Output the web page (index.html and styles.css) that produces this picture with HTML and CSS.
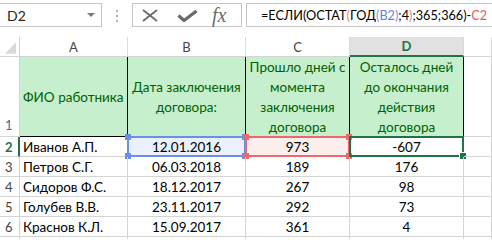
FILE: index.html
```html
<!DOCTYPE html>
<html lang="ru">
<head>
<meta charset="utf-8">
<title>Excel</title>
<link rel="stylesheet" href="styles.css">
</head>
<body>
<div class="toolbar">
  <div class="namebox"><span class="nb-text">D2</span><span class="caret"></span></div>
  <div class="grip"><i></i><i></i><i></i></div>
  <div class="btns">
    <svg class="ic-x" width="18" height="13" viewBox="0 0 18 13"><path d="M2 1 L16 12 M16 1 L2 12" stroke="#6a6a6a" stroke-width="1.8" fill="none"/></svg>
    <svg class="ic-ok" width="21" height="12" viewBox="0 0 21 12"><path d="M1.5 5.5 L7 10.5 L19.5 1" stroke="#6a6a6a" stroke-width="3.2" fill="none"/></svg>
    <span class="fx">fx</span>
  </div>
  <div class="formula"><span>=ЕСЛИ(ОСТАТ</span><span class="c-pink">(</span><span>ГОД</span><span class="c-purple">(</span><span class="c-blue">B2</span><span class="c-purple">)</span><span>;4</span><span class="c-pink">)</span><span>;365;366)-</span><span class="c-red">C2</span></div>
</div>
<div class="sheet">
  <div class="cell corner"><svg width="20" height="20" viewBox="0 0 20 20"><polygon points="5,17 17,17 17,5" fill="#dadada"/></svg></div>
  <div class="cell ch">A</div>
  <div class="cell ch">B</div>
  <div class="cell ch">C</div>
  <div class="cell ch ch-sel">D</div>
  <div class="cell ch"></div>

  <div class="cell rh rh1">1</div>
  <div class="cell r1 left">ФИО работника</div>
  <div class="cell r1">Дата заключения<br>договора:</div>
  <div class="cell r1">Прошло дней с<br>момента<br>заключения<br>договора</div>
  <div class="cell r1">Осталось дней<br>до окончания<br>действия<br>договора</div>
  <div class="cell"></div>

  <div class="cell rh rh-sel">2</div>
  <div class="cell left">Иванов А.П.</div>
  <div class="cell mid ref ref-blue">12.01.2016<span class="hl"><i class="sq tl"></i><i class="sq tr"></i><i class="sq bl"></i><i class="sq br"></i></span></div>
  <div class="cell mid ref ref-red">973<span class="hl"><i class="sq tl"></i><i class="sq tr"></i><i class="sq bl"></i><i class="sq br"></i></span></div>
  <div class="cell mid active">-607<span class="hl"><i class="handle"></i></span></div>
  <div class="cell"></div>

  <div class="cell rh">3</div>
  <div class="cell left">Петров С.Г.</div>
  <div class="cell mid">06.03.2018</div>
  <div class="cell mid">189</div>
  <div class="cell mid">176</div>
  <div class="cell"></div>

  <div class="cell rh">4</div>
  <div class="cell left">Сидоров Ф.С.</div>
  <div class="cell mid">18.12.2017</div>
  <div class="cell mid">267</div>
  <div class="cell mid">98</div>
  <div class="cell"></div>

  <div class="cell rh">5</div>
  <div class="cell left">Голубев В.В.</div>
  <div class="cell mid">23.11.2017</div>
  <div class="cell mid">292</div>
  <div class="cell mid">73</div>
  <div class="cell"></div>

  <div class="cell rh">6</div>
  <div class="cell left">Краснов К.Л.</div>
  <div class="cell mid">15.09.2017</div>
  <div class="cell mid">361</div>
  <div class="cell mid">4</div>
  <div class="cell"></div>

  <div class="cell rh"></div>
  <div class="cell left"></div>
  <div class="cell mid"></div>
  <div class="cell mid"></div>
  <div class="cell mid"></div>
  <div class="cell"></div>
</div>
</body>
</html>
```
FILE: styles.css
```css
* { box-sizing: border-box; }
html, body {
  margin: 0;
  padding: 0;
  width: 492px;
  height: 239px;
  overflow: hidden;
  background: #fff;
  font-family: Lato, "Liberation Sans", sans-serif;
  font-size: 13.5px;
  color: #000;
}

.toolbar {
  display: flex;
  align-items: flex-start;
  height: 37px;
  padding-top: 3px;
  white-space: nowrap;
}
.namebox {
  display: flex;
  align-items: center;
  width: 102px;
  height: 24px;
  border: 1px solid #c6c6c6;
  border-left: none;
  padding-left: 7px;
  color: #262626;
  font-size: 14px;
}
.nb-text { flex: 1; }
.caret {
  width: 0;
  height: 0;
  margin-right: 6px;
  border-left: 4px solid transparent;
  border-right: 4px solid transparent;
  border-top: 4px solid #7a7a7a;
}
.grip {
  display: flex;
  flex-direction: column;
  gap: 3px;
  width: 30px;
  padding-left: 14px;
  padding-top: 7px;
}
.grip i {
  display: block;
  width: 2px;
  height: 2px;
  background: #b4b4b4;
}
.btns {
  display: flex;
  align-items: center;
  width: 110px;
  height: 24px;
  border: 1px solid #c6c6c6;
  padding-left: 8px;
}
.ic-x { margin-right: 18px; }
.ic-ok { margin-right: 14px; margin-top: 1px; }
.fx {
  font-family: "Liberation Serif", serif;
  font-style: italic;
  font-size: 20px;
  color: #6a6a6a;
  line-height: 20px;
}
.formula {
  flex: 1;
  min-width: 0;
  margin-left: 4px;
  height: 24px;
  border: 1px solid #c6c6c6;
  border-right: none;
  padding-left: 14px;
  display: flex;
  align-items: center;
  font-size: 12.7px;
  color: #000;
  overflow: hidden;
}
.c-pink { color: #f07a7a; }
.c-purple { color: #9b7fd4; }
.c-blue { color: #5b83e0; }
.c-red { color: #e45858; }

.sheet {
  display: grid;
  grid-template-columns: 20px 108px 118px 104px 114px 28px;
  grid-template-rows: 20px 80px repeat(6, 20px);
}
.cell {
  display: flex;
  align-items: center;
  justify-content: center;
  border-right: 1px solid #d4d4d4;
  border-bottom: 1px solid #d4d4d4;
  white-space: nowrap;
  overflow: visible;
  position: relative;
}
.left { justify-content: flex-start; padding-left: 3px; }
.mid { justify-content: center; }

.corner { padding: 0; align-items: stretch; }
.corner svg { display: block; }
.ch {
  color: #444;
  font-size: 13px;
  border-right-color: #dadada;
}
.ch-sel {
  background: #e1e1e1;
  color: #217346;
  font-weight: bold;
  border-bottom: 2px solid #217346;
}
.rh {
  justify-content: flex-start;
  padding-left: 5px;
  color: #444;
  font-size: 13px;
}
.rh1 { align-items: flex-end; padding-bottom: 3px; color: #4a6a90; }
.rh-sel {
  color: #217346;
  font-weight: bold;
  border-right: 2px solid #217346;
}

.r1 {
  background: #c6efce;
  color: #006100;
  border-right-color: #000;
  border-bottom-color: #000;
  text-align: center;
  line-height: 20px;
  padding: 0 2px;
}
.r1.left { text-align: left; padding-left: 3px; }

.ref-blue { background: #eaf0fc; }
.ref-red { background: #fdeeee; }
.hl {
  position: absolute;
  left: -1px;
  top: -1px;
  right: -1px;
  bottom: -1px;
  border: 2px solid;
  pointer-events: none;
}
.ref-blue .hl { border-color: #6b8fe3; }
.ref-red .hl { border-color: #e86a6a; }
.sq {
  position: absolute;
  width: 6px;
  height: 6px;
}
.ref-blue .sq { background: #6b8fe3; }
.ref-red .sq { background: #e86a6a; }
.sq.tl { left: -4px; top: -4px; }
.sq.tr { right: -4px; top: -4px; }
.sq.bl { left: -4px; bottom: -4px; }
.sq.br { right: -4px; bottom: -4px; }

.active .hl { border-color: #217346; }
.handle {
  position: absolute;
  right: -4px;
  bottom: -4px;
  width: 6px;
  height: 6px;
  background: #217346;
  outline: 1px solid #fff;
}
```
